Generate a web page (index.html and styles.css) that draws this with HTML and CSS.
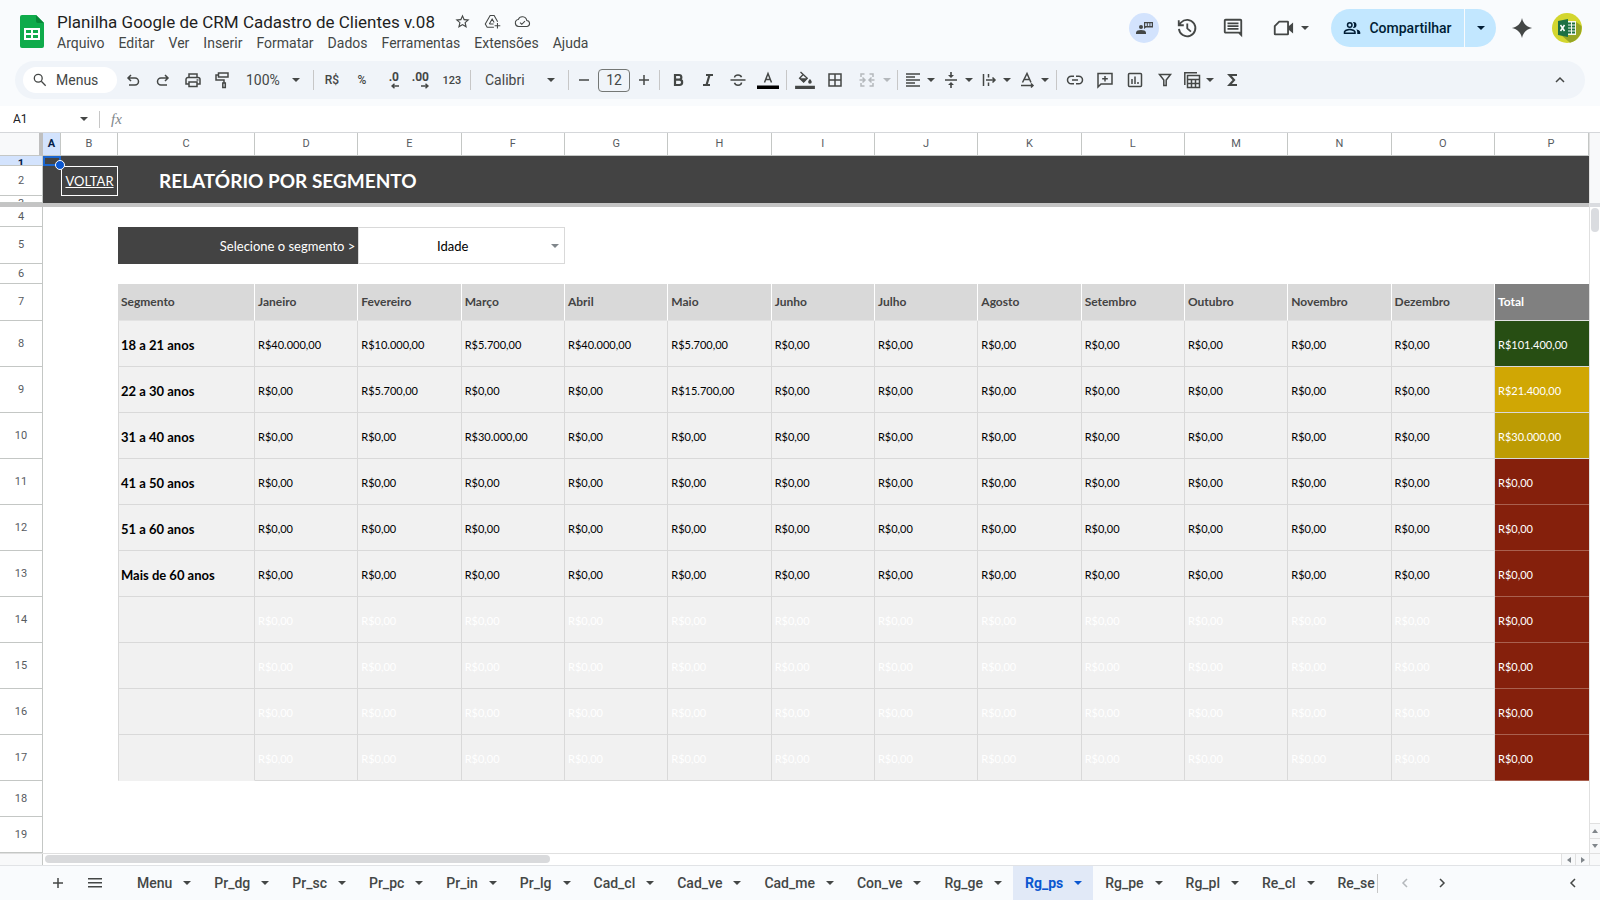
FILE: index.html
```html
<!DOCTYPE html>
<html lang="pt-BR">
<head>
    <meta charset="UTF-8">
    <meta name="viewport" content="width=device-width, initial-scale=1.0">
    <title>Planilha Google de CRM Cadastro de Clientes v.08</title>
    <link rel="stylesheet" href="styles.css">
</head>
<body>

    <!-- shared icons -->
    <svg class="sprite" aria-hidden="true">
        <symbol id="arrow" viewBox="0 0 10 6"><path d="M1 1h8L5 5z"/></symbol>
    </svg>

    <header class="top">
        <svg class="logo" viewBox="0 0 24 33" aria-hidden="true">
            <path fill="#0fab4b" d="M2 0h14l8 8v23a2 2 0 0 1-2 2H2a2 2 0 0 1-2-2V2a2 2 0 0 1 2-2z"/>
            <path fill="#078738" d="M16 0l8 8h-6a2 2 0 0 1-2-2z"/>
            <path fill="#fff" fill-rule="evenodd" d="M4 13h16v12H4zM6 15v3h5v-3zM13 15v3h5v-3zM6 20v3h5v-3zM13 20v3h5v-3z"/>
        </svg>

        <div class="doc">
            <div class="doc-line">
                <h1 class="doc-title">Planilha Google de CRM Cadastro de Clientes v.08</h1>
                <button class="mini" aria-label="Marcar com estrela">
                    <svg viewBox="0 0 24 24"><path d="M22 9.2l-7.2-.6L12 2 9.200 8.600 2 9.200l5.500 4.700L5.800 21 12 17.300 18.200 21l-1.600-7.100zM12 15.400l-3.800 2.300 1-4.300-3.300-2.900 4.400-.4L12 6.100l1.700 4 4.400.4-3.300 2.900 1 4.300z"/></svg>
                </button>
                <button class="mini" aria-label="Mover">
                    <svg viewBox="0 0 24 24" class="line"><path d="M14 20H4.500L1.800 15.500 8.700 3.500h5.600l5 8.800M7.500 15.500h6M7.500 15.500l4-7 2.800 5M19 14v8M15 18h8"/></svg>
                </button>
                <button class="mini" aria-label="Status do documento">
                    <svg viewBox="0 0 24 24" class="line"><path d="M6.500 19A5 5 0 0 1 6 9.100 6.300 6.300 0 0 1 18 10.500a4.300 4.300 0 0 1 .5 8.500zM8.500 13.500l2.500 2.500 4.500-4.500"/></svg>
                </button>
            </div>
            <nav class="menu">
                <button>Arquivo</button>
                <button>Editar</button>
                <button>Ver</button>
                <button>Inserir</button>
                <button>Formatar</button>
                <button>Dados</button>
                <button>Ferramentas</button>
                <button>Extensões</button>
                <button>Ajuda</button>
            </nav>
        </div>

        <div class="actions">
            <button class="present" aria-label="Apresentar">
                <svg viewBox="0 0 18 18"><circle cx="6" cy="8" r="2"/><path d="M1 15v-1.500C1 11.800 3.500 11 6 11s5 .8 5 2.500V15z"/><path fill-rule="evenodd" d="M9 3h9v5.500H11L9 10zM10.200 4.200v2.800h1.600V4.200zM12.800 4.200v2.800h1.600V4.200zM15.400 4.200v2.800h1.400V4.200z"/></svg>
            </button>
            <button class="action" aria-label="Histórico de versões">
                <svg viewBox="0 0 24 24" class="line history"><path d="M3.200 13A9 9 0 1 0 5.500 6L3.500 8.500M3 3.500v5.500h5.500M12.300 7v5.500l4 3.500"/></svg>
            </button>
            <button class="action" aria-label="Comentários">
                <svg viewBox="0 0 24 24"><path d="M4 2h16c1.100 0 2 .9 2 2v18l-4-4H4c-1.100 0-2-.9-2-2V4c0-1.100.9-2 2-2zM4 4v12h16V4zM6 6h12v2H6zM6 9h12v2H6zM6 12h12v2H6z" fill-rule="evenodd"/></svg>
            </button>
            <button class="action meet" aria-label="Videochamada">
                <svg viewBox="0 0 24 24"><path d="M7.500 4H17a1.500 1.500 0 0 1 1.500 1.500V9.800L23 6v12l-4.500-3.800v4.300A1.500 1.500 0 0 1 17 20H3.500A1.500 1.500 0 0 1 2 18.500v-9zM8.300 6L4 10.300V18h12.500V6z" fill-rule="evenodd"/></svg>
                <svg class="arrow"><use href="#arrow"/></svg>
            </button>
            <div class="share">
                <button class="share-main">
                    <svg viewBox="0 0 24 24"><path fill-rule="evenodd" d="M9 4a4 4 0 1 1 0 8 4 4 0 0 1 0-8zM9 6a2 2 0 1 0 0 4 2 2 0 0 0 0-4zM1 20v-2.500C1 14.500 6 13 9 13s8 1.500 8 4.500V20zM3 18h12v-.5c0-1-3.500-2.500-6-2.500s-6 1.500-6 2.500zM14 4a4 4 0 1 1 0 8l-.8-.1a6 6 0 0 0 0-7.800zM17.500 13.500c2.500.6 5.500 1.900 5.500 4V20h-4v-2.500c0-1.600-.6-3-1.500-4z"/></svg>
                    Compartilhar
                </button>
                <button class="share-more" aria-label="Opções de compartilhamento"><svg class="arrow"><use href="#arrow"/></svg></button>
            </div>
            <button class="action" aria-label="Gemini">
                <svg class="spark" viewBox="0 0 24 24"><path d="M12 1c1.200 6 5 9.800 11 11-6 1.200-9.800 5-11 11-1.200-6-5-9.800-11-11 6-1.200 9.800-5 11-11z"/></svg>
            </button>
            <button class="avatar" aria-label="Conta">
                <svg viewBox="0 0 30 30">
                    <circle cx="15" cy="15" r="15" fill="#d3d62f"/>
                    <path fill="#97a625" d="M15 23l8-15 6.500 5A15 15 0 0 1 18 29.700L9 22z"/>
                    <path fill="#f5f8f0" d="M15 8h9v14h-9z"/>
                    <path fill="#1d7044" d="M16 9.500h3v2h-3zM20 9.500h3v2h-3zM16 12.500h3v2h-3zM20 12.500h3v2h-3zM16 15.500h3v2h-3zM20 15.500h3v2h-3zM16 18.500h3v2h-3zM20 18.500h3v2h-3zM6 8l10-2v18L6 22z"/>
                    <path d="M8.500 12l4 6M12.500 12l-4 6" stroke="#fff" stroke-width="1.500"/>
                </svg>
            </button>
        </div>
    </header>

    <div class="toolbar" role="toolbar">
        <button class="search">
            <svg viewBox="0 0 16 16" class="line"><circle cx="6" cy="6" r="4.500"/><path d="M9.500 9.500l5 5"/></svg>
            Menus
        </button>
        <button class="tool" aria-label="Desfazer"><svg viewBox="0 0 18 18" class="line"><path d="M7 4L4 7l3 3M4 7h7a3.500 3.500 0 0 1 0 7H5"/></svg></button>
        <button class="tool" aria-label="Refazer"><svg viewBox="0 0 18 18" class="line"><path d="M11 4l3 3-3 3M14 7H7a3.500 3.500 0 0 0 0 7h6"/></svg></button>
        <button class="tool" aria-label="Imprimir"><svg viewBox="0 0 18 18" class="line"><path d="M5 6V3h8v3M5 13H2V8.500A2 2 0 0 1 4 6.500h10a2 2 0 0 1 2 2V13h-3M5 11h8v4.500H5z"/><circle cx="13.500" cy="9" r=".3"/></svg></button>
        <button class="tool" aria-label="Pintar formatação"><svg viewBox="0 0 18 18" class="line"><path d="M4.500 2H14v4H4.500zM4.500 4H2v5h8v3M8.800 12h2.500v4.500H8.800z"/></svg></button>
        <div class="pick zoom">
            <select aria-label="Zoom"><option>100%</option></select>
            <svg class="arrow"><use href="#arrow"/></svg>
        </div>
        <span class="sep"></span>
        <button class="tool text">R$</button>
        <button class="tool text">%</button>
        <button class="tool dec" aria-label="Diminuir casas decimais"><b>.0</b><svg viewBox="0 0 8 6" class="line"><path d="M8 3H1M3.500 .8L1 3l2.500 2.200"/></svg></button>
        <button class="tool dec" aria-label="Aumentar casas decimais"><b>.00</b><svg viewBox="0 0 8 6" class="line"><path d="M0 3h7M4.500 .8L7 3 4.500 5.200"/></svg></button>
        <button class="tool num">123</button>
        <span class="sep"></span>
        <div class="pick font">
            <select aria-label="Fonte"><option>Calibri</option></select>
            <svg class="arrow"><use href="#arrow"/></svg>
        </div>
        <span class="sep"></span>
        <div class="size">
            <button aria-label="Diminuir fonte"><svg viewBox="0 0 12 12" class="line"><path d="M1 6h10"/></svg></button>
            <input type="text" value="12" aria-label="Tamanho da fonte">
            <button aria-label="Aumentar fonte"><svg viewBox="0 0 12 12" class="line"><path d="M1 6h10M6 1v10"/></svg></button>
        </div>
        <span class="sep"></span>
        <button class="tool" aria-label="Negrito"><svg viewBox="0 0 18 18" class="line bold"><path d="M6 4h4a2.300 2.300 0 0 1 0 4.700H6zM6 8.700h4.500a2.600 2.600 0 0 1 0 5.300H6z"/></svg></button>
        <button class="tool" aria-label="Itálico"><svg viewBox="0 0 18 18" class="line bold"><path d="M7 4h7M4 14h7M10.500 4l-3 10"/></svg></button>
        <button class="tool" aria-label="Tachado"><svg viewBox="0 0 18 18" class="line"><path d="M1.500 9h15M12.500 6.300C12 4.500 10.800 4 9 4S5.600 4.800 5.600 6.500M5.500 11.700C6 13.500 7.200 14.200 9 14.200s3.500-.9 3.500-2.700"/></svg></button>
        <button class="tool ink" aria-label="Cor do texto"><svg viewBox="0 0 22 18"><path class="stroke" d="M7.500 11.500L11 2.500l3.500 9M8.700 8.500h4.600"/><path fill="#000" d="M0 14.500h22V18H0z"/></svg></button>
        <span class="sep"></span>
        <button class="tool ink" aria-label="Cor de preenchimento"><svg viewBox="0 0 22 20"><path class="stroke" d="M6 1l7.500 7.200-4 4L5 8l4-4"/><path d="M5 8h8.500L9.500 12.500zM16.500 9s2 2 2 3.200a2 2 0 0 1-4 0C14.500 11 16.500 9 16.500 9zM0 16.500h22V20H0z"/></svg></button>
        <button class="tool" aria-label="Bordas"><svg viewBox="0 0 18 18" class="line"><path d="M3 3h12v12H3zM9 3v12M3 9h12"/></svg></button>
        <button class="combo merge" disabled aria-label="Mesclar células">
            <svg viewBox="0 0 18 18" class="line"><path d="M6.500 3H3v3M3 12v3h3.500M11.500 3H15v3M15 12v3h-3.500M1.500 9h5M4.500 6.500L7 9l-2.500 2.500M16.500 9h-5M13.500 6.500L11 9l2.500 2.500"/></svg>
            <svg class="arrow"><use href="#arrow"/></svg>
        </button>
        <span class="sep"></span>
        <button class="combo" aria-label="Alinhamento horizontal">
            <svg viewBox="0 0 18 18" class="line"><path d="M2 3h14M2 6h9M2 9h14M2 12h9M2 15h14"/></svg>
            <svg class="arrow"><use href="#arrow"/></svg>
        </button>
        <button class="combo" aria-label="Alinhamento vertical">
            <svg viewBox="0 0 18 18"><path d="M3 8.200h12v1.600H3zM8.200 1h1.600v3H12L9 7 6 4h2.200zM8.200 17h1.600v-3H12l-3-3-3 3h2.200z"/></svg>
            <svg class="arrow"><use href="#arrow"/></svg>
        </button>
        <button class="combo" aria-label="Ajuste de texto">
            <svg viewBox="0 0 18 18" class="line"><path d="M3.500 3v12M8.500 3v3.500M8.500 11.500V15M6 9h9M12.500 6.500L15 9l-2.500 2.500"/></svg>
            <svg class="arrow"><use href="#arrow"/></svg>
        </button>
        <button class="combo" aria-label="Rotação de texto">
            <svg viewBox="0 0 18 18" class="line"><path d="M4.500 11.500L9 2.500l4 9M6 8.500h6M3 14.500h12M13 12.500l2 2-2 2"/></svg>
            <svg class="arrow"><use href="#arrow"/></svg>
        </button>
        <span class="sep"></span>
        <button class="tool" aria-label="Inserir link"><svg viewBox="0 0 18 18" class="line"><path d="M8 5.200H5.300a3.800 3.800 0 0 0 0 7.600H8M10 5.200h2.700a3.800 3.800 0 0 1 0 7.600H10M6 9h6"/></svg></button>
        <button class="tool" aria-label="Inserir comentário"><svg viewBox="0 0 18 18" class="line"><path d="M2 16V2.500h14V13H5zM9 5v5.500M6.200 7.800h5.600"/></svg></button>
        <button class="tool" aria-label="Inserir gráfico"><svg viewBox="0 0 18 18" class="line"><rect x="2.500" y="2.500" width="13" height="13" rx="1"/><path d="M6 8v5M9 5.500V13M12 11v2"/></svg></button>
        <button class="tool" aria-label="Criar filtro"><svg viewBox="0 0 18 18" class="line"><path d="M3.500 3.500h11L10.200 9v5.500H7.800V9z"/></svg></button>
        <button class="combo" aria-label="Tabelas">
            <svg viewBox="0 0 18 18" class="line"><path d="M1.800 14V1.800H14M4.500 4.500h12v12h-12zM4.500 8.500h12M4.500 12.500h12M8.500 8.500v8M12.500 8.500v8"/></svg>
            <svg class="arrow"><use href="#arrow"/></svg>
        </button>
        <button class="tool" aria-label="Funções"><svg viewBox="0 0 18 18" class="line bold"><path d="M13 4H5.500l4.500 5-4.500 5H13"/></svg></button>
        <button class="tool collapse" aria-label="Ocultar menus"><svg viewBox="0 0 18 18" class="line"><path d="M5 11l4-4 4 4"/></svg></button>
    </div>

    <div class="formula">
        <label class="sr" for="cellName">Caixa de nome</label>
        <input class="cell-name" id="cellName" type="text" value="A1">
        <svg class="arrow"><use href="#arrow"/></svg>
        <label class="fx" for="formulaText">fx</label>
        <input class="formula-text" id="formulaText" type="text">
    </div>

    <main class="sheet">
        <div class="grid">
            <table class="cells">
                <colgroup>
                    <col class="c-row"><col class="c-a"><col class="c-b"><col class="c-c">
                    <col><col><col><col><col><col><col><col><col><col><col><col>
                    <col class="c-p">
                </colgroup>
                <thead>
                    <tr class="letters">
                        <td class="corner"></td>
                        <th class="on">A</th><th>B</th><th>C</th><th>D</th><th>E</th><th>F</th><th>G</th><th>H</th>
                        <th>I</th><th>J</th><th>K</th><th>L</th><th>M</th><th>N</th><th>O</th><th class="partial">P</th>
                    </tr>
                    <tr class="dark r1">
                        <th class="on"><div class="clip">1</div></th>
                        <td class="selected"><span class="handle"></span></td>
                        <td colspan="15"></td>
                    </tr>
                    <tr class="dark r2">
                        <th>2</th>
                        <td></td>
                        <td class="back"><a href="#">VOLTAR</a></td>
                        <td class="report" colspan="14">RELATÓRIO POR SEGMENTO</td>
                    </tr>
                    <tr class="dark r3">
                        <th><div class="clip">3</div></th>
                        <td colspan="16"></td>
                    </tr>
                    <tr class="freeze"><td colspan="17"></td></tr>
                </thead>
                <tbody id="rows">
                    <tr class="small"><th>4</th><td colspan="16"></td></tr>
                    <tr class="medium">
                        <th>5</th>
                        <td colspan="2"></td>
                        <td class="ask" colspan="2"><label for="segment">Selecione o segmento &gt;</label></td>
                        <td class="choice" colspan="2">
                            <div class="pick">
                                <select id="segment"><option>Idade</option></select>
                                <svg class="arrow"><use href="#arrow"/></svg>
                            </div>
                        </td>
                        <td colspan="10"></td>
                    </tr>
                    <tr class="small"><th>6</th><td colspan="16"></td></tr>
                    <tr class="medium months">
                        <th>7</th><td></td><td></td>
                        <td>Segmento</td><td>Janeiro</td><td>Fevereiro</td><td>Março</td><td>Abril</td><td>Maio</td>
                        <td>Junho</td><td>Julho</td><td>Agosto</td><td>Setembro</td><td>Outubro</td><td>Novembro</td>
                        <td>Dezembro</td><td class="total">Total</td>
                    </tr>
                </tbody>
            </table>
            <div class="hscroll">
                <div class="hcorner"></div>
                <div class="htrack"><div class="hthumb"></div></div>
                <div class="nub"><svg viewBox="0 0 6 6"><path d="M5 0v6L1 3z"/></svg></div>
                <div class="nub"><svg viewBox="0 0 6 6"><path d="M1 0v6l4-3z"/></svg></div>
            </div>
        </div>
        <div class="vscroll">
            <div class="vtop"></div>
            <div class="vtrack"><div class="vthumb"></div></div>
            <div class="vnub"><svg viewBox="0 0 6 6"><path d="M0 5h6L3 1z"/></svg></div>
            <div class="vnub"><svg viewBox="0 0 6 6"><path d="M0 1h6L3 5z"/></svg></div>
            <div class="vend"></div>
        </div>
    </main>

    <footer class="tabs">
        <button class="tab-icon" aria-label="Adicionar página"><svg viewBox="0 0 18 18" class="line"><path d="M4 9h10M9 4v10"/></svg></button>
        <button class="tab-icon" aria-label="Todas as páginas"><svg viewBox="0 0 18 18" class="line"><path d="M2 4.800h14M2 8.800h14M2 12.800h14"/></svg></button>
        <div class="tab-list" id="tabList"></div>
        <button class="tab-icon off" aria-label="Anterior"><svg viewBox="0 0 18 18" class="line"><path d="M11 5L7 9l4 4"/></svg></button>
        <button class="tab-icon" aria-label="Próxima"><svg viewBox="0 0 18 18" class="line"><path d="M7 5l4 4-4 4"/></svg></button>
        <button class="tab-icon last" aria-label="Mostrar painel lateral"><svg viewBox="0 0 18 18" class="line"><path d="M11 5L7 9l4 4"/></svg></button>
    </footer>

    <script>
        var zero = 'R$0,00';
        // values holds only the first months, the others are zero
        var segments = [
            { name: '18 a 21 anos', values: ['R$40.000,00', 'R$10.000,00', 'R$5.700,00', 'R$40.000,00', 'R$5.700,00'], total: 'R$101.400,00', level: 'green' },
            { name: '22 a 30 anos', values: [zero, 'R$5.700,00', zero, zero, 'R$15.700,00'], total: 'R$21.400,00', level: 'yellow' },
            { name: '31 a 40 anos', values: [zero, zero, 'R$30.000,00'], total: 'R$30.000,00', level: 'gold' },
            { name: '41 a 50 anos', values: [], total: zero, level: 'red' },
            { name: '51 a 60 anos', values: [], total: zero, level: 'red' },
            { name: 'Mais de 60 anos', values: [], total: zero, level: 'red' },
            { name: '', values: [], total: zero, level: 'red' },
            { name: '', values: [], total: zero, level: 'red' },
            { name: '', values: [], total: zero, level: 'red' },
            { name: '', values: [], total: zero, level: 'red' }
        ];

        var tbody = document.getElementById('rows');
        segments.forEach(function (segment, i) {
            var cells = '';
            for (var m = 0; m < 12; m++) {
                cells += `<td>${segment.values[m] || zero}</td>`;
            }
            var row = document.createElement('tr');
            row.className = segment.name ? 'data' : 'data empty';
            row.innerHTML = `
                <th>${i + 8}</th><td></td><td></td>
                <td class="name">${segment.name}</td>
                ${cells}
                <td class="${segment.level}">${segment.total}</td>
            `;
            tbody.appendChild(row);
        });

        [18, 19].forEach(function (n) {
            var row = document.createElement('tr');
            row.className = 'plain';
            row.innerHTML = `<th>${n}</th><td colspan="16"></td>`;
            tbody.appendChild(row);
        });

        // Sheet tabs
        var tabs = ['Menu', 'Pr_dg', 'Pr_sc', 'Pr_pc', 'Pr_in', 'Pr_lg', 'Cad_cl', 'Cad_ve', 'Cad_me', 'Con_ve', 'Rg_ge', 'Rg_ps', 'Rg_pe', 'Rg_pl', 'Re_cl', 'Re_se'];
        document.getElementById('tabList').innerHTML = tabs.map(function (tab) {
            return `<button class="tab${tab === 'Rg_ps' ? ' active' : ''}">${tab}<svg class="arrow"><use href="#arrow"/></svg></button>`;
        }).join('');
    </script>

</body>
</html>
```
FILE: styles.css
```css
* {
    box-sizing: border-box;
}

body {
    margin: 0;
    height: 100vh;
    display: flex;
    flex-direction: column;
    overflow: hidden;
    background-color: #f9fbfd;
    font-family: Roboto, "Liberation Sans", sans-serif;
    font-size: 14px;
    color: #444746;
}

button, input, select {
    font: inherit;
    color: inherit;
    border: none;
    background: none;
    padding: 0;
    margin: 0;
}

button {
    display: flex;
    align-items: center;
    justify-content: center;
    flex: none;
    cursor: pointer;
}

svg {
    fill: currentColor;
    flex: none;
    display: block;
}

.line, .stroke {
    fill: none;
    stroke: currentColor;
    stroke-width: 1.5;
}

.bold {
    stroke-width: 2.2;
}

.history {
    stroke-width: 2;
}

.arrow {
    width: 10px;
    height: 6px;
}

.sprite {
    display: none;
}

.sr {
    position: absolute;
    width: 1px;
    height: 1px;
    overflow: hidden;
    clip-path: inset(50%);
}

/* Header */
.top {
    display: flex;
    align-items: flex-start;
    height: 61px;
    flex: none;
    padding: 9px 18px 0 20px;
}

.logo {
    width: 24px;
    height: 33px;
    margin-top: 6px;
}

.doc {
    margin-left: 13px;
}

.doc-line {
    display: flex;
    align-items: center;
    height: 25px;
}

.doc-title {
    margin: 0 13px 0 0;
    font-size: 17px;
    font-weight: 400;
    color: #1f1f1f;
}

.mini {
    width: 30px;
}

.mini svg {
    width: 17px;
    height: 17px;
}

.menu {
    display: flex;
    gap: 14px;
    height: 18px;
}

.actions {
    display: flex;
    align-items: center;
    height: 38px;
    margin-left: auto;
}

.present {
    width: 30px;
    height: 30px;
    margin-right: 12px;
    border-radius: 50%;
    background-color: #d3e3fd;
}

.present svg {
    width: 18px;
    height: 18px;
}

.action {
    width: 32px;
    height: 32px;
    margin-right: 14px;
}

.action svg:first-child {
    width: 22px;
    height: 22px;
}

.action .spark {
    width: 20px;
}

.meet {
    width: 56px;
    gap: 6px;
    margin-right: 12px;
}

.share {
    display: flex;
    height: 38px;
    margin-right: 10px;
    color: #001d35;
}

.share-main {
    gap: 8px;
    width: 133px;
    border-radius: 19px 0 0 19px;
    background-color: #c2e7ff;
    font-weight: 500;
}

.share-main svg {
    width: 18px;
    height: 18px;
}

.share-more {
    width: 31px;
    margin-left: 1px;
    border-radius: 0 19px 19px 0;
    background-color: #c2e7ff;
}

.avatar svg {
    width: 30px;
    height: 30px;
}

/* Toolbar */
.toolbar {
    display: flex;
    align-items: center;
    flex: none;
    height: 38px;
    margin: 0 15px 7px;
    padding: 0 10px 0 8px;
    border-radius: 19px;
    background-color: #f0f4f9;
}

.search {
    justify-content: flex-start;
    gap: 9px;
    width: 94px;
    height: 26px;
    margin-right: 1px;
    padding-left: 10px;
    border-radius: 13px;
    background-color: #fff;
}

.search svg {
    width: 14px;
    height: 14px;
}

.tool {
    width: 30px;
    height: 26px;
}

.tool svg, .combo svg:first-child {
    width: 18px;
    height: 18px;
}

.tool.text {
    font-size: 12px;
    font-weight: 500;
}

.tool.num {
    font-size: 11px;
    font-weight: 500;
}

.dec {
    flex-direction: column;
    align-items: flex-end;
    padding-right: 8px;
    font-size: 12px;
    line-height: 12px;
}

.tool.dec svg {
    width: 8px;
    height: 6px;
}

.tool.ink svg {
    width: 22px;
    height: 18px;
}

.pick {
    display: flex;
    align-items: center;
}

.pick select {
    appearance: none;
    flex: 1;
    min-width: 0;
}

.zoom {
    width: 72px;
    padding: 0 9px 0 8px;
}

.font {
    width: 91px;
    padding: 0 9px 0 11px;
}

.sep {
    width: 1px;
    height: 20px;
    margin: 0 3px;
    background-color: #c7c7c7;
}

.size {
    display: flex;
    gap: 3px;
    padding: 0 1px;
}

.size button {
    width: 22px;
}

.size button svg {
    width: 12px;
    height: 12px;
}

.size input {
    width: 32px;
    height: 23px;
    border: 1px solid #747775;
    border-radius: 4px;
    text-align: center;
}

.combo {
    justify-content: flex-start;
    gap: 4px;
    width: 38px;
    height: 26px;
    padding-left: 3px;
}

.merge {
    gap: 6px;
    width: 44px;
    padding-left: 8px;
    color: #b4b8bc;
}

.collapse {
    margin-left: auto;
}

/* Formula bar */
.formula {
    display: flex;
    align-items: center;
    flex: none;
    height: 26px;
    padding-left: 13px;
    background-color: #fff;
}

.cell-name {
    width: 66px;
    font-size: 12px;
    color: #202124;
}

.fx {
    margin-left: 10px;
    padding-left: 11px;
    border-left: 1px solid #c7c7c7;
    font-family: "Liberation Serif", serif;
    font-size: 15px;
    font-style: italic;
    color: #80868b;
}

.formula-text {
    flex: 1;
}

/* Sheet */
.sheet {
    display: flex;
    flex: 1;
    min-height: 0;
    background-color: #fff;
    border-top: 1px solid #d5d7da;
}

.grid {
    display: flex;
    flex-direction: column;
    flex: 1;
    min-width: 0;
}

.cells {
    flex: 1;
    width: 100%;
    table-layout: fixed;
    border-collapse: separate;
    border-spacing: 0;
    font-family: Lato, "Open Sans", sans-serif;
    font-size: 11px;
    line-height: 14px;
    color: #000;
}

.c-row {
    width: 43px;
}

.c-a {
    width: 18px;
}

.c-b {
    width: 57px;
}

.c-c {
    width: 137px;
}

.c-p {
    width: 94px;
}

.cells th, .cells td {
    padding: 0;
    white-space: nowrap;
}

.cells th {
    border-right: 1px solid #c4c7c5;
    border-bottom: 1px solid #c4c7c5;
    font-family: Roboto, "Liberation Sans", sans-serif;
    font-weight: 400;
    color: #575b5f;
}

.cells th.on {
    background-color: #d3e3fd;
    font-weight: 700;
    color: #041e49;
}

.cells th.partial {
    padding-left: 19px;
}

.letters {
    height: 23px;
}

.corner {
    background-color: #f8f9fa;
    border-right: 4px solid #bfbfbf;
    border-bottom: 1px solid #c4c7c5;
}

.clip {
    display: flex;
    align-items: flex-start;
    justify-content: center;
    overflow: hidden;
    padding-top: 1px;
}

.r1 .clip {
    height: 9px;
}

.r3 .clip {
    height: 6px;
}

.dark td {
    background-color: #434343;
    color: #fff;
}

.cells .selected {
    position: relative;
    border: 2px solid #1a66d0;
}

.handle {
    position: absolute;
    right: -6px;
    bottom: -6px;
    z-index: 1;
    width: 10px;
    height: 10px;
    border: 1px solid #fff;
    border-radius: 50%;
    background-color: #0b57d0;
}

.r2 {
    height: 30px;
}

.cells .back {
    border: 1px solid #fff;
    text-align: center;
    font-size: 13px;
}

.back a {
    color: #fff;
}

.cells .report {
    padding-left: 41px;
    font-size: 19px;
    line-height: 24px;
    font-weight: 700;
}

.freeze {
    height: 4px;
}

.freeze td {
    background-color: #c4c4c4;
}

.small {
    height: 20px;
}

.medium {
    height: 37px;
}

.plain {
    height: 36px;
}

.data {
    height: 46px;
}

.cells .ask {
    padding-right: 3px;
    background-color: #434343;
    color: #fff;
    text-align: right;
    font-size: 13px;
}

.cells .choice {
    border: 1px solid #d9d9d9;
    font-size: 13px;
}

.choice .pick {
    padding-right: 4px;
}

.choice select {
    padding-right: 4px;
    text-align: center;
    text-align-last: center;
}

.choice .arrow {
    color: #80868b;
}

.months td:nth-child(n+4) {
    padding-left: 3px;
    border-right: 1px solid #fff;
    border-bottom: 1px solid #e3e3e3;
    background-color: #d9d9d9;
    font-weight: 700;
    font-size: 12px;
    color: #434343;
}

.cells .months .total {
    border-right: none;
    background-color: #808080;
    color: #fff;
}

.data td:nth-child(n+4) {
    padding: 2px 0 0 3px;
    border-right: 1px solid #d9d9d9;
    border-bottom: 1px solid #d9d9d9;
    background-color: #f1f1f1;
}

.months td:nth-child(4), .data td:nth-child(4) {
    border-left: 1px solid #d9d9d9;
    padding-left: 2px;
}

.cells .data .name {
    font-weight: 700;
    font-size: 13px;
}

.cells .data:nth-child(14) .name {
    border-bottom-color: #f1f1f1;
}

.cells .empty td {
    color: #fff;
}

.cells .data .green, .cells .data .yellow, .cells .data .gold, .cells .data .red {
    border-right: none;
    color: #fff;
}

.cells .data .green {
    background-color: #274e13;
}

.cells .data .yellow {
    background-color: #d0a704;
}

.cells .data .gold {
    background-color: #bd9c04;
}

.cells .data .red {
    background-color: #85200c;
    border-bottom-color: #a9604f;
}

/* Scrollbars */
.hscroll {
    display: flex;
    flex: none;
    height: 12px;
    border-top: 1px solid #e0e0e0;
}

.hcorner {
    width: 43px;
    background-color: #f8f9fa;
    border-right: 1px solid #c4c7c5;
}

.htrack {
    flex: 1;
    padding: 1px 2px;
}

.hthumb {
    width: calc(100% / 3);
    height: 8px;
    border-radius: 4px;
    background-color: #d9dadc;
}

.nub, .vnub {
    display: flex;
    align-items: center;
    justify-content: center;
    background-color: #f8f9fa;
    color: #80868b;
}

.nub {
    width: 14px;
    border-left: 1px solid #e0e0e0;
}

.nub svg, .vnub svg {
    width: 6px;
    height: 6px;
}

.vscroll {
    display: flex;
    flex-direction: column;
    width: 11px;
    border-left: 1px solid #e0e0e0;
}

.vtop {
    height: 74px;
    background-color: #f8f9fa;
    border-bottom: 4px solid #dadce0;
}

.vtrack {
    flex: 1;
    padding: 1px;
}

.vthumb {
    height: 24px;
    border-radius: 4px;
    background-color: #dadce0;
}

.vnub {
    height: 15px;
    border-top: 1px solid #e0e0e0;
}

.vend {
    height: 12px;
    background-color: #f8f9fa;
    border-top: 1px solid #e0e0e0;
}

/* Sheet tabs */
.tabs {
    display: flex;
    align-items: stretch;
    flex: none;
    height: 35px;
    padding: 0 10px 0 39px;
    border-top: 1px solid #e1e3e6;
}

.tab-icon {
    width: 37px;
}

.tab-icon svg {
    width: 18px;
    height: 18px;
}

.tab-list {
    position: relative;
    display: flex;
    width: 1258px;
    margin: 0 3px 0 12px;
    overflow: hidden;
}

/* divider over the cut-off last tab */
.tab-list::after {
    content: "";
    position: absolute;
    right: 0;
    top: 8px;
    width: 5px;
    height: 19px;
    border-left: 1px solid #c7c7c7;
    background-color: #f9fbfd;
}

.tab {
    gap: 10px;
    padding: 0 10px 0 12px;
    font-weight: 500;
}

.tab.active {
    background-color: #e1e9f7;
    color: #0b57d0;
    font-weight: 700;
}

.off {
    color: #b4b8bc;
}

.last {
    width: 34px;
    margin-left: auto;
}
```
